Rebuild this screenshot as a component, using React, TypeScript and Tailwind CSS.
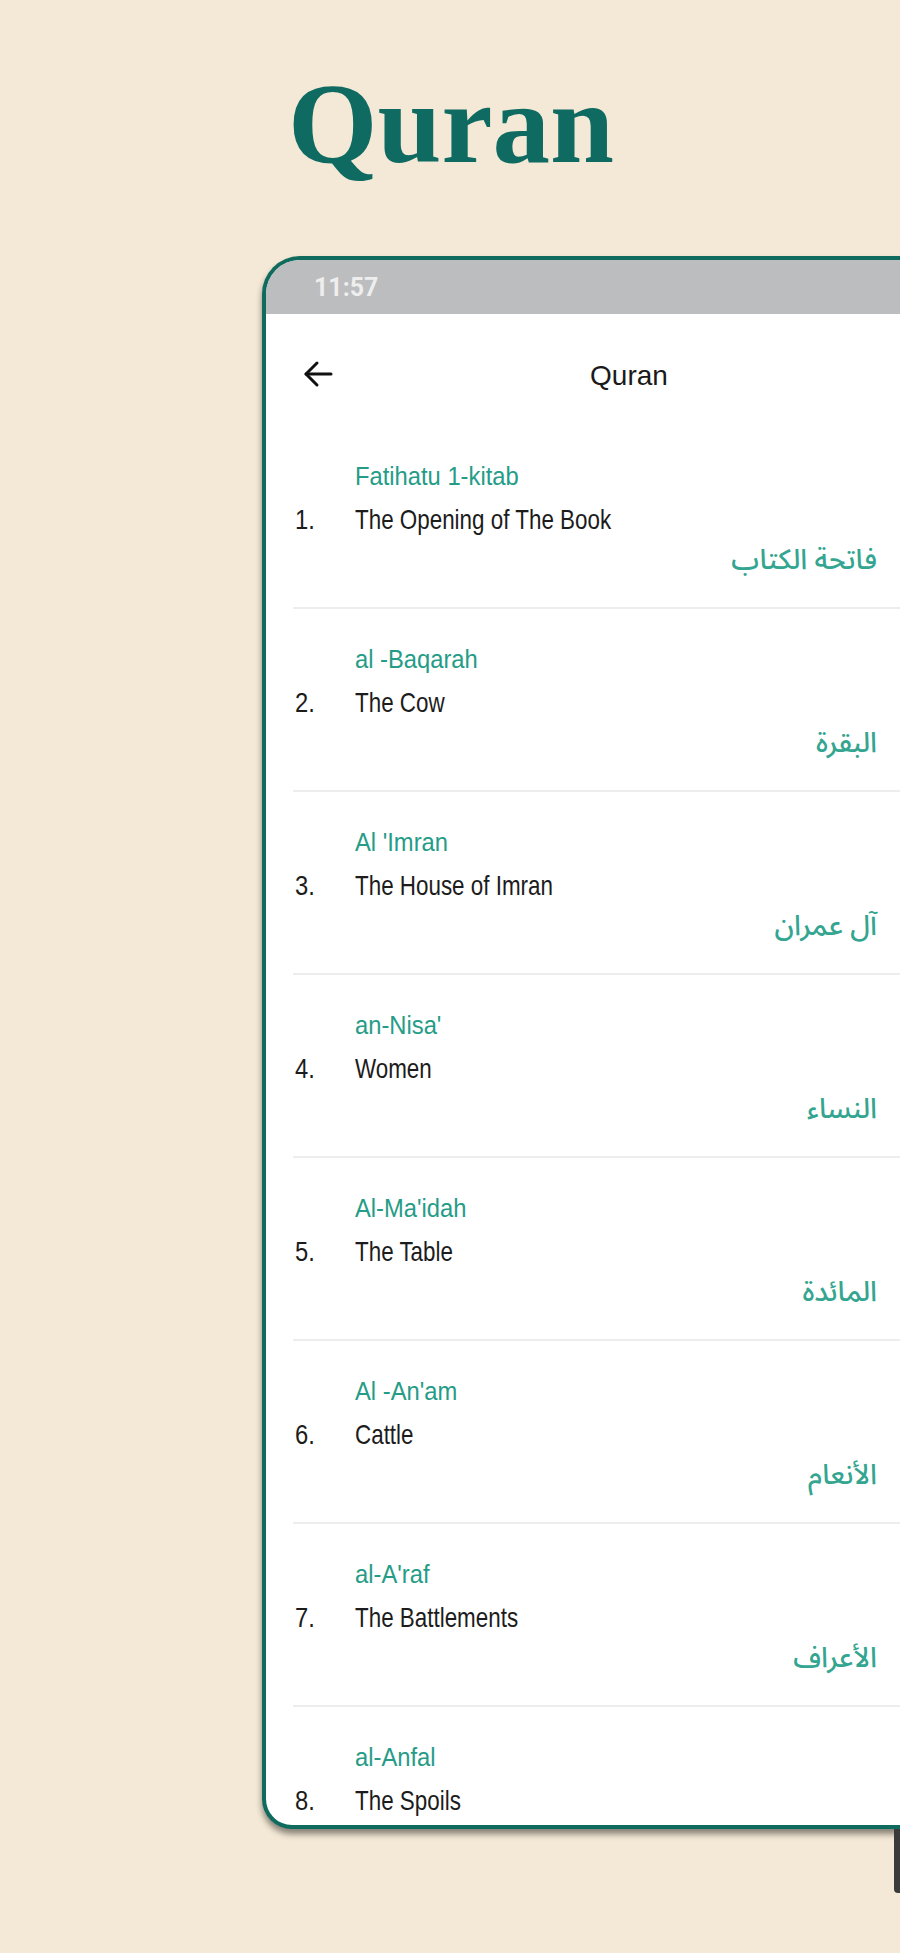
import type { ReactNode } from 'react'

interface Surah {
  no: number
  name: string
  meaning: string
  arabic: string
}

const surahs: Surah[] = [
  { no: 1, name: 'Fatihatu 1-kitab', meaning: 'The Opening of The Book', arabic: 'فاتحة الكتاب' },
  { no: 2, name: 'al -Baqarah', meaning: 'The Cow', arabic: 'البقرة' },
  { no: 3, name: "Al 'Imran", meaning: 'The House of Imran', arabic: 'آل عمران' },
  { no: 4, name: "an-Nisa'", meaning: 'Women', arabic: 'النساء' },
  { no: 5, name: "Al-Ma'idah", meaning: 'The Table', arabic: 'المائدة' },
  { no: 6, name: "Al -An'am", meaning: 'Cattle', arabic: 'الأنعام' },
  { no: 7, name: "al-A'raf", meaning: 'The Battlements', arabic: 'الأعراف' },
  { no: 8, name: 'al-Anfal', meaning: 'The Spoils', arabic: 'الأنفال' },
]

function BackArrow() {
  return (
    <svg width="32" height="30" viewBox="0 0 32 30" fill="none" stroke="#111" strokeWidth="3" strokeLinecap="round" strokeLinejoin="round">
      <path d="M29 15H4" />
      <path d="M15 4 4 15l11 11" />
    </svg>
  )
}

function SurahRow({ surah }: { surah: Surah }) {
  return (
    <div className="ml-[27px] border-b-2 border-[#ededed] pt-[35px] pb-[26px]">
      <div className="pl-[62px] text-[25px] leading-[30px] text-[#259c87]">
        <span className="inline-block origin-left scale-x-[0.95] whitespace-nowrap">{surah.name}</span>
      </div>
      <div className="mt-[12px] flex text-[28px] leading-[34px] text-[#1c1c1c]">
        <span className="w-[62px] pl-[2px]">
          <span className="inline-block origin-left scale-x-[0.85]">{surah.no}.</span>
        </span>
        <span className="inline-block origin-left scale-x-[0.8] whitespace-nowrap">{surah.meaning}</span>
      </div>
      <div
        dir="rtl"
        className="mt-[4px] w-[584px] text-[28px] leading-[40px] font-medium text-[#33a590] [font-family:'Noto_Sans_Arabic','DejaVu_Sans',sans-serif]"
      >
        {surah.arabic}
      </div>
    </div>
  )
}

function PhoneFrame({ children }: { children: ReactNode }) {
  return (
    <div className="ml-[262px] mt-[75px] w-[730px] h-[1573px] shrink-0 overflow-hidden rounded-tl-[38px] rounded-bl-[30px] border-4 border-r-0 border-[#0e6b5e] bg-white shadow-[0_5px_6px_rgba(0,0,0,0.45)]">
      {children}
    </div>
  )
}

export default function App() {
  return (
    <div className="w-[900px] h-[1953px] overflow-hidden bg-[#f4e9d6]">
      <h1 className="pl-[288px] pt-[66px] text-[115px] leading-[115px] font-bold text-[#0f6b61] [font-family:'Liberation_Serif',serif]">
        Quran
      </h1>

      <PhoneFrame>
        {/* status bar */}
        <div className="flex h-[54px] items-center bg-[#bcbdbe] pl-[48px] pt-[2px] text-[25px] font-bold text-white/75 [font-family:Roboto,sans-serif]">
          11:57
        </div>

        {/* app bar */}
        <div className="relative flex h-[112px] items-center justify-center pt-[12px] [font-family:'Liberation_Sans',Arial,sans-serif]">
          <div className="absolute left-[36px] top-[45px]">
            <BackArrow />
          </div>
          <span className="text-[28px] text-[#1a1a1a]">Quran</span>
        </div>

        {/* list */}
        <div className="[font-family:'Liberation_Sans',Arial,sans-serif]">
          {surahs.map((s) => (
            <SurahRow key={s.no} surah={s} />
          ))}
        </div>
      </PhoneFrame>

      <div className="flex justify-end">
        <div className="h-[64px] w-[6px] rounded-bl-[4px] bg-[#3a3a3a]" />
      </div>
    </div>
  )
}
